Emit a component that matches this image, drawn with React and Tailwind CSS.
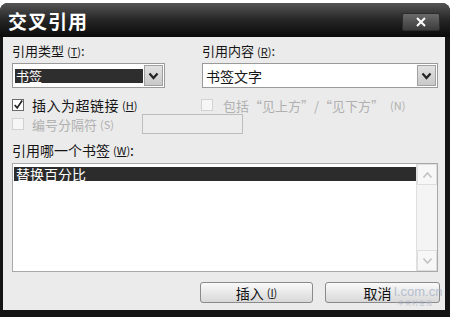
import React from "react";

const font = { fontFamily: '"Noto Sans CJK SC", "Noto Sans", sans-serif' };

function Key({ k }) {
  return (
    <span className="text-[11px] ml-[3px]">
      (<span className="underline">{k}</span>)
    </span>
  );
}

function Chevron({ up = false, color = "#222", w = 2.2 }) {
  return (
    <svg width="11" height="8" viewBox="0 0 11 8">
      <polyline
        points={up ? "1.5,6.5 5.5,2 9.5,6.5" : "1.5,1.5 5.5,6 9.5,1.5"}
        fill="none"
        stroke={color}
        strokeWidth={w}
      />
    </svg>
  );
}

function DropButton() {
  return (
    <div className="w-[19px] h-[21px] my-[1px] mr-[1px] bg-gradient-to-b from-[#e2e2e2] to-[#c8c8c8] border border-[#a0a0a0] flex items-center justify-center">
      <Chevron />
    </div>
  );
}

function Check({ checked, disabled }) {
  return (
    <div
      className={
        "w-[12px] h-[12px] border flex items-center justify-center " +
        (disabled ? "border-[#d2d2d2] bg-[#f6f6f6]" : "border-[#6a6a6a] bg-white")
      }
    >
      {checked && (
        <svg width="12" height="12" viewBox="0 0 12 12">
          <polyline points="2,6 5,9.5 11,0.5" fill="none" stroke="#222" strokeWidth="2" />
        </svg>
      )}
    </div>
  );
}

export default function App() {
  return (
    <div className="w-[450px] h-[317px] bg-white flex flex-col pt-[3px] overflow-hidden relative" style={font}>
      <div className="flex-1 flex flex-col bg-[#141414] rounded-t-[8px] pb-[7px] pl-[3px] pr-[5px]">
        {/* 标题栏 */}
        <div className="h-[34px] -ml-[3px] -mr-[5px] rounded-t-[8px] bg-gradient-to-b from-[#555] via-[#262626] to-[#0a0a0a] flex items-center justify-between pl-[8px] pr-[10px]">
          <span className="text-white text-[19px] font-bold tracking-[1px] leading-none">交叉引用</span>
          <div className="w-[38px] h-[18px] mt-[4px] rounded-[2px] border border-[#2c2c2c] bg-gradient-to-b from-[#6a6a6a] to-[#3c3c3c] flex items-center justify-center">
            <svg width="12" height="10" viewBox="0 0 12 10">
              <path d="M2 1 L10 9 M10 1 L2 9" stroke="#fff" strokeWidth="2" />
            </svg>
          </div>
        </div>

        {/* 主体 */}
        <div className="flex-1 bg-[#ebebeb] pl-[9px] pt-[5px] text-[#151515] text-[13px]">
          <div className="flex h-[16px] items-center leading-none">
            <div className="w-[190px]">
              引用类型<Key k="T" />:
            </div>
            <div>
              引用内容<Key k="R" />:
            </div>
          </div>

          <div className="flex mt-[5px]">
            <div className="w-[153px] h-[25px] border border-[#9a9a9a] bg-white flex items-center">
              <div className="flex-1 h-[14px] ml-[2px] mr-[1px] bg-[#2e2e2e] text-white text-[13px] leading-[14px] pl-[1px]">书签</div>
              <DropButton />
            </div>
            <div className="w-[236px] h-[25px] ml-[37px] border border-[#9a9a9a] bg-white flex items-center">
              <div className="flex-1 pl-[3px] text-[14px] leading-none">书签文字</div>
              <DropButton />
            </div>
          </div>

          <div className="flex mt-[9px] h-[16px] items-center leading-none">
            <div className="w-[189px] flex items-center">
              <Check checked />
              <span className="ml-[8px] text-[14px] tracking-[0.5px]">插入为超链接</span>
              <Key k="H" />
            </div>
            <div className="flex items-center text-[#b0b0b0]">
              <Check disabled />
              <span className="ml-[10px] text-[13px]">包括“见上方”/“见下方”</span>
              <span className="text-[11px] ml-[6px]">(N)</span>
            </div>
          </div>

          <div className="flex mt-[1px] h-[20px] items-center leading-none">
            <div className="w-[130px] flex items-center text-[#b0b0b0]">
              <Check disabled />
              <span className="ml-[8px] text-[13px]">编号分隔符</span>
              <span className="text-[11px] ml-[3px]">(S)</span>
            </div>
            <div className="w-[101px] h-[20px] border border-[#bdbdbd] bg-[#ececec]" />
          </div>

          <div className="mt-[8px] h-[16px] flex items-center leading-none text-[14px]">
            引用哪一个书签<Key k="W" />:
          </div>

          <div className="mt-[5px] w-[426px] h-[109px] border border-[#a8a8a8] bg-white flex">
            <div className="flex-1 pt-[3px] pl-[1px]">
              <div className="h-[14px] bg-[#2c2c2c] text-white text-[14px] leading-[14px] pl-[2px]">替换百分比</div>
            </div>
            <div className="w-[21px] flex flex-col justify-between bg-[#f4f4f4] border-l border-[#e0e0e0]">
              <div className="h-[21px] border border-[#dedede] bg-[#f7f7f7] flex items-center justify-center">
                <Chevron up color="#c4c4c4" w={1.8} />
              </div>
              <div className="h-[21px] border border-[#dedede] bg-[#f7f7f7] flex items-center justify-center">
                <Chevron color="#c4c4c4" w={1.8} />
              </div>
            </div>
          </div>

          <div className="mt-[10px] flex justify-end pr-[5px]">
            <button className="w-[113px] h-[21px] rounded-[3px] border border-[#8a8a8a] bg-gradient-to-b from-[#fafafa] to-[#d8d8d8] text-[14px] leading-none flex items-center justify-center text-[#111]">
              插入<Key k="I" />
            </button>
            <button className="w-[115px] h-[21px] ml-[12px] rounded-[3px] border border-[#8a8a8a] bg-gradient-to-b from-[#fafafa] to-[#d8d8d8] text-[14px] leading-none flex items-center justify-center pr-[10px] text-[#111]">
              取消
            </button>
          </div>
        </div>
      </div>

      {/* 水印 */}
      <div className="absolute left-[394px] top-[285px] text-[13px] leading-none text-[#a9b4c8] opacity-80" style={{ fontFamily: '"Liberation Sans", sans-serif' }}>
        l.com.cn
      </div>
      <div className="absolute left-[398px] top-[300px] text-[6px] leading-none text-[#b4bccb] tracking-[1px]">中关村在线</div>
    </div>
  );
}
